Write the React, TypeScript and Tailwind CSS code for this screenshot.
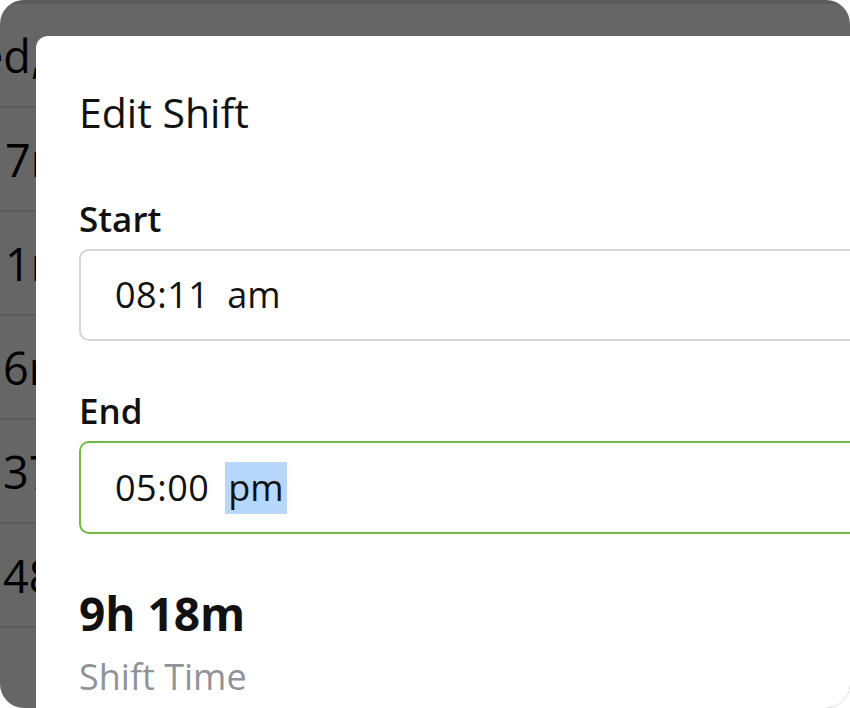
import React from "react";

const rows = [
  { text: "ed,", shift: "-ml-[22px]" },
  { text: "7min", shift: "ml-[5px]" },
  { text: "1min", shift: "ml-[5px]" },
  { text: "6min", shift: "ml-[3px]" },
  { text: "37min", shift: "ml-[3px]" },
  { text: "48min", shift: "ml-[3px]" },
];

function TimeField({ value, period, focused }: { value: string; period: string; focused?: boolean }) {
  return (
    <div
      className={
        focused
          ? "flex h-[93px] items-center rounded-[10px] border-2 border-[#74b944] bg-white pl-[34px]"
          : "flex h-[92px] items-center rounded-[10px] border-2 border-[#d6d6da] bg-white pl-[34px]"
      }
    >
      <span className="text-[36px] leading-[44px] tracking-[0.5px] text-[#111]">{value}</span>
      <span
        className={
          focused
            ? "ml-[16px] bg-[#b6d6fb] px-[3px] py-[4px] text-[36px] leading-[44px] text-[#111]"
            : "ml-[16px] px-[2px] py-[4px] text-[36px] leading-[44px] text-[#111]"
        }
      >
        {period}
      </span>
    </div>
  );
}

export default function App() {
  return (
    <div className="h-[708px] w-[850px] bg-white" style={{ fontFamily: '"Open Sans", "Noto Sans", sans-serif' }}>
      <div className="relative h-[708px] w-[850px] overflow-hidden rounded-[24px] bg-white">
        {/* page behind the dialog, only its left edge shows */}
        <div className="border-t-[4px] border-[#e2e2e2]">
          <div className="w-[40px] overflow-hidden">
            {rows.map((r) => (
              <div key={r.text} className="flex h-[104px] items-center overflow-hidden border-b-2 border-[#e6e6e6]">
                <span className={`${r.shift} whitespace-nowrap text-[45px] leading-none text-black`}>{r.text}</span>
              </div>
            ))}
          </div>
        </div>

        {/* overlay */}
        <div className="absolute inset-0 bg-black/60" />

        {/* dialog */}
        <div className="absolute left-[36px] top-[36px] h-[720px] w-[860px] rounded-tl-[12px] bg-white pl-[43px] pt-[52px]">
          <h2 className="text-[41px] font-normal leading-[48px] text-[#111]">Edit Shift</h2>

          <label className="mt-[61px] block text-[35px] font-semibold leading-[44px] text-[#111]">Start</label>
          <div className="mt-[8px]">
            <TimeField value="08:11" period="am" />
          </div>

          <label className="mt-[48px] block text-[35px] font-semibold leading-[44px] text-[#111]">End</label>
          <div className="mt-[8px]">
            <TimeField value="05:00" period="pm" focused />
          </div>

          <div className="mt-[51px] text-[46px] font-bold leading-[56px] text-[#111]">9h 18m</div>
          <div className="mt-[14px] text-[36px] leading-[44px] text-[#8f9297]">Shift Time</div>
        </div>
      </div>
    </div>
  );
}
